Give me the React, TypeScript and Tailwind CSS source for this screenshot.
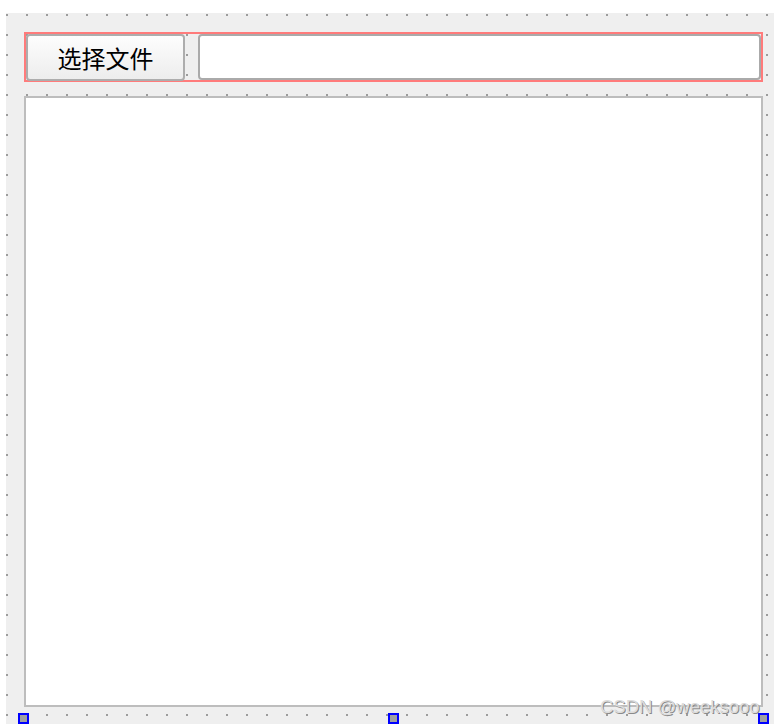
export default function App() {
  return (
    <div className="relative flex h-[724px] w-[774px] overflow-hidden bg-white pl-[6px] pt-[13px] font-['Liberation_Sans',sans-serif]">
      {/* designer form with grid dots */}
      <div className="flex flex-1 flex-col bg-[#efefef] bg-[radial-gradient(circle_at_1px_2px,#9c9c9c_0.9px,transparent_1.2px)] bg-[size:20px_20px] pl-[18px] pr-[11px] pt-[19px]">
        {/* horizontal layout (red frame) */}
        <div className="flex h-[50px] gap-[13px] border-2 border-[#ff7b7b]">
          <button className="h-[47px] w-[159px] rounded-[4px] border-2 border-[#adadad] bg-gradient-to-b from-[#fdfdfd] to-[#ededed] pt-[1px] text-[24px] leading-none text-black font-['Noto_Sans_CJK_SC',sans-serif]">
            选择文件
          </button>
          <input
            type="text"
            className="h-[46px] flex-1 rounded-[4px] border-2 border-[#aaaaaa] bg-white outline-none"
          />
        </div>
        {/* text area */}
        <div className="mt-[14px] h-[611px] border-2 border-[#bdbdbd] bg-white" />
      </div>

      {/* selection handles */}
      <div className="absolute left-[18px] top-[713px] h-[11px] w-[11px] border-2 border-[#0000ff] bg-[#a0a0a0]" />
      <div className="absolute left-[388px] top-[713px] h-[11px] w-[11px] border-2 border-[#0000ff] bg-[#a0a0a0]" />
      <div className="absolute left-[758px] top-[713px] h-[11px] w-[11px] border-2 border-[#0000ff] bg-[#a0a0a0]" />

      {/* watermark */}
      <div className="absolute left-[600px] top-[698px] text-[18.5px] leading-none text-[#dcdcdc] [text-shadow:1px_1px_0_#8a8a8a]">
        CSDN @weeksooo
      </div>
    </div>
  );
}
